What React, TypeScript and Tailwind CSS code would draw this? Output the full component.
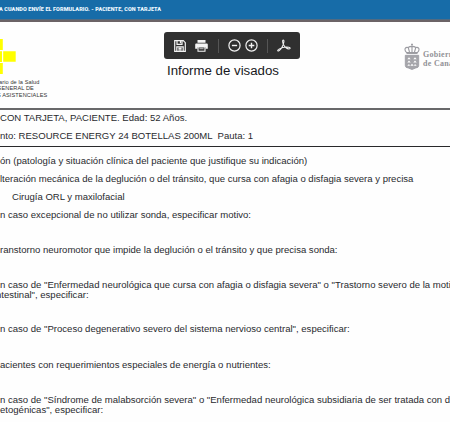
import React from "react";

function Line({ text, className }: { text: string; className: string }) {
  return <p className={`h-3 shrink-0 whitespace-pre text-[9.55px] leading-3 ${className}`}>{text}</p>;
}

function YellowCross() {
  return (
    <svg className="block" width="16" height="36" viewBox="0 0 16 36" fill="#ffff00">
      <path d="M0 0h2.8v11H0zM0 12.2h2v10.7H0zM3.2 12.2H15.7v10.6H3.2zM0 24h2.8v11H0z" />
    </svg>
  );
}

function SaveIcon() {
  return (
    <svg width="12" height="12" viewBox="0 0 12 12" fill="none" stroke="#f2f2f2" strokeWidth="1.2">
      <path d="M.7.7h8.6l2 2v8.6H.7zM3 .9v3.4h5V.9M2.8 11V6.8h6.4V11M4.4 8.3h3.2M4.4 9.8h3.2" />
      <path d="M6.5 1v2.2" />
    </svg>
  );
}

function PrintIcon() {
  return (
    <svg width="13" height="12" viewBox="0 0 13 12">
      <path d="M2.5 0h8v2.8h-8zM1.2 3.6h10.6q1 0 1 1v4.2h-2.3V7h-8v1.8H.2V4.6q0-1 1-1z" fill="#f5f5f5" />
      <path d="M3 7v4.3h7V7z" fill="#333" stroke="#f5f5f5" strokeWidth="1.1" />
      <path d="M4.4 8.7h4.2" stroke="#ddd" strokeWidth=".8" />
    </svg>
  );
}

function CircleIcon({ plus }: { plus?: boolean }) {
  return (
    <svg width="13" height="13" viewBox="0 0 13 13" fill="none" stroke="#f2f2f2" strokeWidth="1.2">
      <circle cx="6.5" cy="6.5" r="5.6" />
      <path d={plus ? "M3.7 6.5h5.6M6.5 3.7v5.6" : "M3.9 6.5h5.2"} strokeWidth="1.4" />
    </svg>
  );
}

function AcrobatIcon() {
  return (
    <svg width="14" height="13" viewBox="0 0 14 13" fill="none" stroke="#f2f2f2" strokeWidth="1.05" strokeLinejoin="round">
      <path d="M6.3 1c-1.1 0-.8 2.6.3 4.7C7.700 7.800 10 9.800 12 9.900c1.700 0 1.500-1.500-.2-1.700C8.500 7.800 4.400 8.700 2 10.100.1 11.200.5 12.400 1.600 11.900 3.500 11 5.700 7 6.500 4.600 7.100 2.800 7.200 1 6.300 1z" />
    </svg>
  );
}

function Toolbar() {
  return (
    <div className="mt-[10px] flex h-[27px] w-[136px] items-center rounded-[3px] bg-[#303030] pl-[10px]">
      <SaveIcon />
      <span className="ml-[9px]"><PrintIcon /></span>
      <span className="ml-[10px] h-[14px] w-px bg-[#555]" />
      <span className="ml-[9px]"><CircleIcon /></span>
      <span className="ml-[4px]"><CircleIcon plus /></span>
      <span className="ml-[9px] h-[14px] w-px bg-[#555]" />
      <span className="ml-[9px]"><AcrobatIcon /></span>
    </div>
  );
}

function Crest() {
  return (
    <svg className="shrink-0" width="16" height="28" viewBox="0 0 16 28" fill="none" stroke="#9b9ba1">
      <path d="M8 .5v3M7 1.5h2" strokeWidth=".9" />
      <path d="M2.500 9.500C-.5 6 1.500 3.800 4.200 4.500 6 3 10 3 11.800 4.500 14.500 3.800 16.500 6 13.500 9.500zM4.200 4.500 5.500 9M11.800 4.500 10.500 9M8 3.500V9" strokeWidth="1.1" />
      <path d="M2.500 10.200h11" strokeWidth="1.5" />
      <path d="M1.300 12.300h13.400v10.200q0 2.300-3 2.500L8 26.500 4.300 25q-3-.2-3-2.500z" fill="#a5a5aa" strokeWidth=".8" />
      <path d="M3.300 16.200 5 14.200l1.700 2zM9.300 16.200l1.700-2 1.700 2zM3.300 19.500 5 17.500l1.700 2zM9.300 19.500l1.700-2 1.700 2zM6.300 22.800l1.700-2 1.700 2zM3.300 22.800 5 21l1 1.800zM10 22.800l1-1.800 1.700 1.800z" fill="#fff" stroke="none" />
    </svg>
  );
}

export default function App() {
  return (
    <main className="flex h-[422px] w-[450px] flex-col overflow-hidden bg-[#fefefe] font-['Liberation_Sans',Arial,sans-serif] text-[#292a2e]">
      <div className="flex h-[19px] shrink-0 items-center bg-[#176ca8] font-['Roboto',sans-serif] text-[5.5px] font-black leading-none text-[#edf8ff]">
        <span className="-ml-px whitespace-pre tracking-[0.07px]">A CUANDO ENVÍE EL FORMULARIO. - PACIENTE, CON TARJETA</span>
      </div>
      <div className="h-[3px] shrink-0 border-t border-[#516b82] bg-[#6b6366]" />
      <header className="flex h-[86px] shrink-0">
        <div className="w-[164px] shrink-0 pt-[17px]">
          <YellowCross />
          <div className="mt-[4px] whitespace-nowrap text-[5.6px] leading-[6.3px] text-[#333]">
            <p className="-ml-px tracking-[0.1px]">ario de la Salud</p>
            <p className="-ml-[3px] tracking-[0.1px]">GENERAL DE</p>
            <p className="-ml-[3px] tracking-[0.1px]">S ASISTENCIALES</p>
          </div>
        </div>
        <div className="w-[240px] shrink-0">
          <Toolbar />
          <h1 className="ml-[3px] mt-[4px] whitespace-nowrap text-[13.25px] font-normal leading-4 text-[#17171b]">Informe de visados</h1>
        </div>
        <div className="flex shrink-0 gap-[3px] pt-[21px]">
          <Crest />
          <p className="mt-[8px] whitespace-nowrap font-['Liberation_Serif',serif] text-[8px] font-bold leading-[8.5px] tracking-[0.3px] text-[#929297]">
            Gobierno<br />de Canarias
          </p>
        </div>
      </header>
      <section className="flex h-[39px] shrink-0 flex-col border-b border-t-2 border-b-[#29292b] border-t-[#68686a]">
        <Line text="CON TARJETA, PACIENTE. Edad: 52 Años." className="mt-[2px]" />
        <Line text="nto: RESOURCE ENERGY 24 BOTELLAS 200ML  Pauta: 1" className="mt-[6px]" />
      </section>
      <section className="flex flex-col">
        <Line text="ón (patología y situación clínica del paciente que justifique su indicación)" className="mt-[8px]" />
        <Line text="lteración mecánica de la deglución o del tránsito, que cursa con afagia o disfagia severa y precisa" className="mt-[6px]" />
        <Line text="Cirugía ORL y maxilofacial" className="ml-3 mt-[6px]" />
        <Line text="n caso excepcional de no utilizar sonda, especificar motivo:" className="mt-[6px]" />
        <Line text="ranstorno neuromotor que impide la deglución o el tránsito y que precisa sonda:" className="mt-[23px]" />
        <Line text={'n caso de "Enfermedad neurológica que cursa con afagia o disfagia severa" o "Trastorno severo de la motilidad'} className="mt-[23px]" />
        <Line text={'ntestinal", especificar:'} className="-ml-1 -mt-[2px]" />
        <Line text={'n caso de "Proceso degenerativo severo del sistema nervioso central", especificar:'} className="mt-[22px]" />
        <Line text="acientes con requerimientos especiales de energía o nutrientes:" className="mt-[24px]" />
        <Line text={'n caso de "Síndrome de malabsorción severa" o "Enfermedad neurológica subsidiaria de ser tratada con dietas'} className="mt-[23px]" />
        <Line text={'etogénicas", especificar:'} className="-mt-[2px]" />
      </section>
    </main>
  );
}
